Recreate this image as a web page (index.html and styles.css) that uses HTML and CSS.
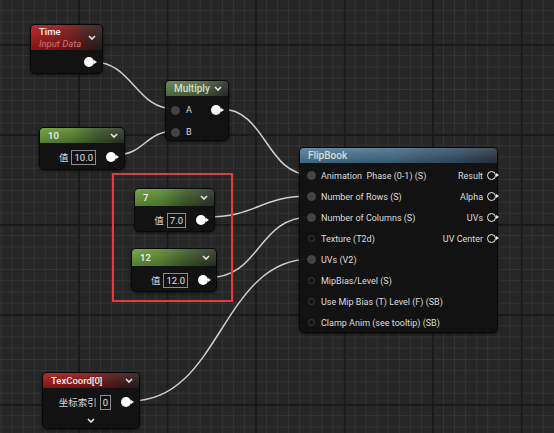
FILE: index.html
```html
<!DOCTYPE html>
<html lang="en">
  <head>
    <meta charset="UTF-8" />
    <title>Material Graph</title>
    <link rel="stylesheet" href="styles.css">
  </head>
  <body>
    <div class="graph">
      <!-- Wires -->
      <svg class="wires" width="554" height="433" viewBox="0 0 554 433">
        <path d="M93 62 C133 62 135 109 175 109" />
        <path d="M115 155 C145 155 145 131 175 131" />
        <path d="M221 109 C266 109 266 175 311 175" />
        <path d="M206 217 C258 217 259 196 311 196" />
        <path d="M207 278 C262 278 256 217 311 217" />
        <path d="M131 401 C221 401 221 259 311 259" />
      </svg>

      <!-- Time -->
      <div class="node n-time">
        <div class="head red tall">
          <div class="titles">
            <span class="title">Time</span>
            <span class="sub">Input Data</span>
          </div>
          <svg class="chev" width="8" height="5" viewBox="0 0 8 5"><polyline points="1,1 4,4 7,1" /></svg>
        </div>
        <div class="row out-row time-row">
          <span class="pin-out"></span>
        </div>
      </div>

      <!-- Multiply -->
      <div class="node n-mul">
        <div class="head mul">
          <span class="title dim">Multiply</span>
          <svg class="chev" width="8" height="5" viewBox="0 0 8 5"><polyline points="1,1 4,4 7,1" /></svg>
        </div>
        <div class="mul-body">
          <div class="col">
            <div class="pin-row"><span class="pin-in full"></span><span class="lbl">A</span></div>
            <div class="pin-row"><span class="pin-in full"></span><span class="lbl">B</span></div>
          </div>
          <div class="col right">
            <div class="pin-row"><span class="pin-out"></span></div>
          </div>
        </div>
      </div>

      <!-- Constant 10 -->
      <div class="node n-10">
        <div class="head green">
          <span class="title">10</span>
          <svg class="chev" width="8" height="5" viewBox="0 0 8 5"><polyline points="1,1 4,4 7,1" /></svg>
        </div>
        <div class="row out-row">
          <span class="cjk">值</span>
          <span class="val">10.0</span>
          <span class="pin-out"></span>
        </div>
      </div>

      <!-- Highlight box -->
      <div class="mark"></div>

      <!-- Constant 7 -->
      <div class="node n-7">
        <div class="head green">
          <span class="title">7</span>
          <svg class="chev" width="8" height="5" viewBox="0 0 8 5"><polyline points="1,1 4,4 7,1" /></svg>
        </div>
        <div class="row out-row">
          <span class="cjk">值</span>
          <span class="val">7.0</span>
          <span class="pin-out"></span>
        </div>
      </div>

      <!-- Constant 12 -->
      <div class="node n-12">
        <div class="head green">
          <span class="title">12</span>
          <svg class="chev" width="8" height="5" viewBox="0 0 8 5"><polyline points="1,1 4,4 7,1" /></svg>
        </div>
        <div class="row out-row">
          <span class="cjk">值</span>
          <span class="val">12.0</span>
          <span class="pin-out"></span>
        </div>
      </div>

      <!-- FlipBook -->
      <div class="node n-flip">
        <div class="head blue">
          <span class="title dim">FlipBook</span>
        </div>
        <div class="flip-body">
          <div class="col">
            <div class="pin-row"><span class="pin-in full"></span><span class="lbl">Animation&nbsp; Phase (0-1) (S)</span></div>
            <div class="pin-row"><span class="pin-in full"></span><span class="lbl">Number of Rows (S)</span></div>
            <div class="pin-row"><span class="pin-in full"></span><span class="lbl">Number of Columns (S)</span></div>
            <div class="pin-row"><span class="pin-in"></span><span class="lbl">Texture (T2d)</span></div>
            <div class="pin-row"><span class="pin-in full"></span><span class="lbl">UVs (V2)</span></div>
            <div class="pin-row"><span class="pin-in"></span><span class="lbl">MipBias/Level (S)</span></div>
            <div class="pin-row"><span class="pin-in"></span><span class="lbl">Use Mip Bias (T) Level (F) (SB)</span></div>
            <div class="pin-row"><span class="pin-in"></span><span class="lbl">Clamp Anim (see tooltip) (SB)</span></div>
          </div>
          <div class="col right">
            <div class="pin-row"><span class="lbl">Result</span><span class="pin-ring"></span></div>
            <div class="pin-row"><span class="lbl">Alpha</span><span class="pin-ring"></span></div>
            <div class="pin-row"><span class="lbl">UVs</span><span class="pin-ring"></span></div>
            <div class="pin-row"><span class="lbl">UV Center</span><span class="pin-ring"></span></div>
          </div>
        </div>
      </div>

      <!-- TexCoord -->
      <div class="node n-tex">
        <div class="head red">
          <span class="title">TexCoord[0]</span>
          <svg class="chev" width="8" height="5" viewBox="0 0 8 5"><polyline points="1,1 4,4 7,1" /></svg>
        </div>
        <div class="row out-row">
          <span class="cjk">坐标索引</span>
          <span class="val">0</span>
          <span class="pin-out"></span>
        </div>
        <div class="foot">
          <svg class="chev" width="8" height="5" viewBox="0 0 8 5"><polyline points="1,1 4,4 7,1" /></svg>
        </div>
      </div>
    </div>
  </body>
</html>
```

FILE: styles.css
```css
body {
  margin: 0;
  background: #262626;
  font-family: Roboto, "Noto Sans", sans-serif;
  overflow: hidden;
}

.graph {
  position: relative;
  width: 554px;
  height: 433px;
  background-color: #262626;
  background-image:
    linear-gradient(90deg, #1a1a1a 2px, transparent 2px),
    linear-gradient(#1a1a1a 2px, transparent 2px),
    linear-gradient(90deg, #343434 1px, transparent 1px),
    linear-gradient(#343434 1px, transparent 1px);
  background-size: 88.5px 100%, 100% 90px, 11.0625px 100%, 100% 11.25px;
  background-position: 78px 0, 0 44px, 78px 0, 0 44px;
}

.wires {
  position: absolute;
  left: 0;
  top: 0;
  z-index: 1;
}

.wires path {
  fill: none;
  stroke: #cfcfcf;
  stroke-width: 1.5;
}

.node {
  position: absolute;
  z-index: 2;
  box-sizing: border-box;
  background: rgba(18, 18, 18, 0.96);
  border: 1px solid #070707;
  border-radius: 5px;
  box-shadow: 0 1px 3px rgba(0, 0, 0, 0.6);
  color: #e4e4e4;
  font-size: 9px;
}

.head {
  height: 15px;
  display: flex;
  align-items: center;
  justify-content: space-between;
  padding: 0 6px 0 8px;
  border-radius: 4px 4px 0 0;
}

.head.tall {
  height: 25px;
}

.head.red {
  background:
    linear-gradient(rgba(255, 255, 255, 0.08), rgba(0, 0, 0, 0.25)),
    linear-gradient(90deg, #b01c1c 0%, #8e1818 45%, #4a1c1c 80%, #2e2222 100%);
}

.head.green {
  background:
    linear-gradient(rgba(255, 255, 255, 0.1), rgba(0, 0, 0, 0.2)),
    linear-gradient(90deg, #6a9c38 0%, #5a8a30 35%, #3e5c28 65%, #2e3529 100%);
}

.head.mul {
  background:
    linear-gradient(rgba(255, 255, 255, 0.1), rgba(0, 0, 0, 0.2)),
    linear-gradient(90deg, #5d7f4c 0%, #52703f 50%, #3a4a34 80%, #2c302b 100%);
}

.head.blue {
  background:
    linear-gradient(rgba(255, 255, 255, 0.12), rgba(0, 0, 0, 0.2)),
    linear-gradient(90deg, #4f7d9c 0%, #456f8c 45%, #34506a 80%, #2a3542 100%);
}

.titles {
  display: flex;
  flex-direction: column;
  line-height: 12px;
}

.title {
  font-weight: 500;
  color: #f0f0f0;
  font-size: 9.5px;
}

.title.dim {
  color: #d4dcd0;
  font-size: 10px;
}

.sub {
  font-style: italic;
  color: #d27474;
  font-size: 9.5px;
}

.chev polyline {
  fill: none;
  stroke: #e8e8e8;
  stroke-width: 1.6;
}

.row {
  display: flex;
  align-items: center;
}

.out-row {
  justify-content: flex-end;
  height: 28px;
  padding-right: 8px;
}

.time-row {
  height: 24px;
  padding-right: 8px;
}

.cjk {
  font-family: "Noto Sans CJK SC", sans-serif;
  font-size: 9.5px;
  color: #d8d8d8;
  margin-right: 3px;
}

.val {
  border: 1px solid #8c8c8c;
  padding: 0 2px;
  height: 13px;
  line-height: 13px;
  font-size: 9.5px;
  color: #e0e0e0;
  margin-right: 10px;
}

.pin-out {
  width: 10px;
  height: 10px;
  border-radius: 50%;
  background: #ffffff;
  position: relative;
}

.pin-out::after {
  content: "";
  position: absolute;
  right: -3px;
  top: 3px;
  border-left: 3px solid #ffffff;
  border-top: 2px solid transparent;
  border-bottom: 2px solid transparent;
}

.pin-in {
  width: 7px;
  height: 7px;
  border-radius: 50%;
  border: 1px solid #3e3e3e;
  box-sizing: border-box;
  flex: none;
}

.pin-in.full {
  width: 9px;
  height: 9px;
  background: #444;
  border-color: #444;
}

.pin-ring {
  width: 9px;
  height: 9px;
  box-sizing: border-box;
  border: 1.5px solid #f0f0f0;
  border-radius: 50%;
  margin-left: 4px;
  position: relative;
}

.pin-ring::after {
  content: "";
  position: absolute;
  right: -4px;
  top: 1px;
  border-left: 3px solid #f0f0f0;
  border-top: 2px solid transparent;
  border-bottom: 2px solid transparent;
}

.col {
  display: flex;
  flex-direction: column;
}

.col.right {
  align-items: flex-end;
}

.pin-row {
  display: flex;
  align-items: center;
}

.lbl {
  color: #dcdcdc;
  font-size: 9px;
  white-space: nowrap;
}

.mul-body {
  display: flex;
  justify-content: space-between;
  padding: 3px 7px 0 5px;
}

.mul-body .pin-row {
  height: 22px;
}

.mul-body .lbl {
  margin-left: 6px;
}

.flip-body {
  display: flex;
  justify-content: space-between;
  padding: 2px 8px 0 7px;
}

.flip-body .pin-row {
  height: 21px;
}

.flip-body .pin-in:not(.full) {
  margin: 0 1px;
}

.flip-body .col:first-child .lbl {
  margin-left: 5px;
}

.foot {
  display: flex;
  justify-content: center;
  padding-top: 2px;
}

.mark {
  position: absolute;
  z-index: 3;
  left: 112px;
  top: 173px;
  width: 121px;
  height: 129px;
  box-sizing: border-box;
  border: 2px solid #e23b3b;
}

.n-time { left: 30px; top: 24px; width: 73px; height: 50px; }
.n-mul { left: 165px; top: 80px; width: 64px; height: 61px; }
.n-10 { left: 39px; top: 127px; width: 86px; height: 43px; }
.n-7 { left: 134px; top: 188px; width: 81px; height: 44px; }
.n-12 { left: 131px; top: 248px; width: 86px; height: 44px; }
.n-flip { left: 299px; top: 147px; width: 199px; height: 186px; }
.n-tex { left: 42px; top: 372px; width: 98px; height: 57px; }

.n-7 .head, .n-12 .head { height: 17px; }
```
